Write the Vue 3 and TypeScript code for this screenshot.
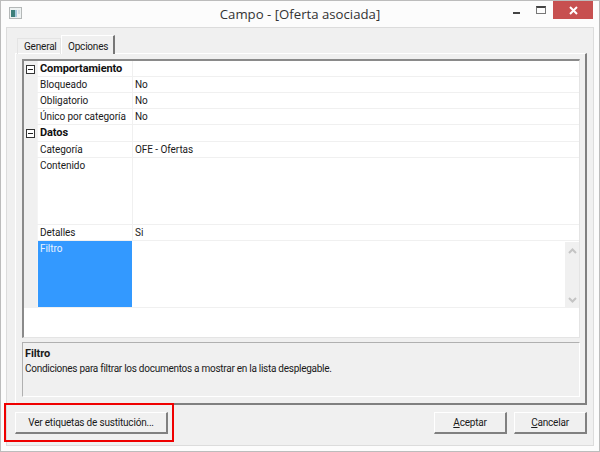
<script setup lang="ts">
interface Row { name: string; value?: string; size?: 'tall' | 'mid'; kind?: 'head' | 'sel' }
const rows: Row[] = [
  { name: 'Comportamiento', kind: 'head' },
  { name: 'Bloqueado', value: 'No' },
  { name: 'Obligatorio', value: 'No' },
  { name: 'Único por categoría', value: 'No' },
  { name: 'Datos', kind: 'head', size: 'mid' },
  { name: 'Categoría', value: 'OFE - Ofertas' },
  { name: 'Contenido', size: 'tall' },
  { name: 'Detalles', value: 'Si' },
  { name: 'Filtro', size: 'tall', kind: 'sel' },
]
</script>

<template>
  <div class="window">
    <header class="titlebar">
      <svg class="appicon" width="13" height="13" viewBox="0 0 13 13">
        <rect x="0.5" y="0.5" width="12" height="11" fill="#eef2f2" stroke="#b4b8b8" />
        <rect x="2" y="3" width="4" height="7" fill="#3c7f7a" />
        <rect x="6" y="3" width="2" height="7" fill="#a5c8dc" />
        <rect x="9" y="3" width="2" height="4" fill="#d5dfe5" />
      </svg>
      <div class="title">Campo - [Oferta asociada]</div>
      <div class="controls">
        <div class="ctl"><span class="min"></span></div>
        <div class="ctl"><span class="max"></span></div>
        <div class="close">
          <svg width="9" height="9" viewBox="0 0 9 9"><path d="M1 1l7 7M8 1L1 8" stroke="#fff" stroke-width="2" /></svg>
        </div>
      </div>
    </header>
    <main class="body">
      <nav class="tabs">
        <div class="tab">General</div>
        <div class="tab active">Opciones</div>
      </nav>
      <section class="panel">
        <div class="grid">
          <div v-for="r in rows" :key="r.name" class="row" :class="[r.size, { head: r.kind === 'head' }]">
            <div class="gutter"><span v-if="r.kind === 'head'" class="box"><i></i></span></div>
            <div class="name" :class="{ sel: r.kind === 'sel' }">{{ r.name }}</div>
            <div class="value">
              {{ r.value }}
              <div v-if="r.kind === 'sel'" class="scroll">
                <svg width="9" height="6" viewBox="0 0 9 6"><path d="M1 5l3.5-3.5L8 5" fill="none" stroke="#c4c4c4" stroke-width="2" /></svg>
                <svg width="9" height="6" viewBox="0 0 9 6"><path d="M1 1l3.5 3.5L8 1" fill="none" stroke="#c4c4c4" stroke-width="2" /></svg>
              </div>
            </div>
          </div>
        </div>
        <div class="desc">
          <div class="desc-title">Filtro</div>
          <div>Condiciones para filtrar los documentos a mostrar en la lista desplegable.</div>
        </div>
      </section>
      <footer class="actions">
        <button class="btn wide">Ver etiquetas de sustitución...</button>
        <div class="spacer"></div>
        <button class="btn"><u>A</u>ceptar</button>
        <button class="btn"><u>C</u>ancelar</button>
      </footer>
    </main>
    <div class="callout"></div>
  </div>
</template>

<style>
html, body { margin: 0; background: #fff; }
</style>

<style scoped>
.window {
  position: relative;
  width: 600px;
  height: 452px;
  box-sizing: border-box;
  border: 1px solid #bcbcbc;
  background: #fcfcfc;
  display: flex;
  flex-direction: column;
  font-family: Roboto, "Liberation Sans", sans-serif;
  font-size: 10px;
  letter-spacing: -0.2px;
  color: #1a1a1a;
  overflow: hidden;
}
.titlebar {
  height: 26px;
  flex: none;
  display: flex;
  align-items: flex-start;
  position: relative;
  padding-left: 8px;
  padding-right: 5px;
}
.appicon { margin-top: 6px; }
.title {
  position: absolute;
  left: 0;
  right: 0;
  top: 4px;
  text-align: center;
  font-family: "Open Sans", sans-serif;
  font-size: 13.2px;
  letter-spacing: 0;
  color: #333;
}
.controls {
  margin-left: auto;
  display: flex;
  position: relative;
}
.ctl {
  width: 27px;
  height: 18px;
  position: relative;
}
.min {
  position: absolute;
  left: 14px;
  top: 11px;
  width: 7px;
  height: 2px;
  background: #444;
}
.max {
  position: absolute;
  left: 10px;
  top: 5px;
  width: 8px;
  height: 5px;
  border: 1px solid #777;
  border-top: 2px solid #444;
}
.close {
  width: 40px;
  height: 18px;
  margin-right: 1px;
  background: #c75050;
  display: flex;
  align-items: center;
  justify-content: center;
}
.body {
  flex: 1;
  margin: 0 5px 5px;
  background: #f0f0f0;
  border: 1px solid #dcdcdc;
  padding: 7px 6px 0 8px;
  display: flex;
  flex-direction: column;
  min-height: 0;
}
.tabs {
  display: flex;
  height: 19px;
  flex: none;
  padding-left: 2px;
  align-items: flex-end;
  position: relative;
  z-index: 1;
  margin-bottom: -1px;
}
.tab {
  height: 16px;
  padding: 0 4px 0 6px;
  line-height: 16px;
  border: 1px solid #e4e4e4;
  border-bottom: 0;
  box-sizing: border-box;
  width: 44px;
}
.tab.active {
  height: 19px;
  width: 54px;
  line-height: 21px;
  padding: 0 0 0 6px;
  background: #f0f0f0;
  border-top-color: #fff;
  border-left-color: #fff;
  border-right: 2px solid #777;
}
.panel {
  height: 352px;
  flex: none;
  box-sizing: border-box;
  border: 1px solid #fff;
  border-right: 2px solid #808080;
  border-bottom: 2px solid #808080;
  padding: 5px 5px 6px 6px;
  display: flex;
  flex-direction: column;
  gap: 4px;
}
.grid {
  height: 279px;
  flex: none;
  box-sizing: border-box;
  border-top: 2px solid #8a8a8a;
  border-left: 2px solid #8a8a8a;
  border-right: 1px solid #e4e4e4;
  border-bottom: 1px solid #e4e4e4;
  background: #fff;
  letter-spacing: -0.06px;
}
.row {
  display: flex;
  height: 16px;
  line-height: 15px;
  border-bottom: 1px solid #f0f0f0;
  box-sizing: border-box;
}
.row.mid { height: 17px; line-height: 16px; }
.row.tall { height: 67px; }
.gutter {
  width: 14px;
  flex: none;
  box-sizing: border-box;
  background: #f0f0f0;
  position: relative;
  border-right: 1px solid #f4f4f4;
}
.box {
  position: absolute;
  left: 2px;
  top: 4px;
  width: 7px;
  height: 7px;
  border: 1px solid #333;
  background: #fff;
}
.box i {
  position: absolute;
  left: 1px;
  right: 1px;
  top: 3px;
  height: 1px;
  background: #222;
}
.name {
  width: 95px;
  flex: none;
  padding-left: 2px;
  box-sizing: border-box;
  border-right: 1px solid #f0f0f0;
  white-space: nowrap;
}
.name.sel {
  background: #3399ff;
  color: #e8f3ff;
  border-right-color: #fff;
}
.head .name {
  font-size: 11px;
  font-weight: bold;
  letter-spacing: -0.1px;
  color: #111;
}
.value {
  flex: 1;
  padding-left: 2px;
  position: relative;
}
.scroll {
  position: absolute;
  right: 0;
  top: 1px;
  bottom: 0;
  width: 14px;
  background: #f0f0f0;
  display: flex;
  flex-direction: column;
  align-items: center;
  justify-content: space-between;
  padding: 6px 0 4px;
  box-sizing: border-box;
}
.desc {
  flex: 1;
  border: 1px solid #b0b0b0;
  border-right-color: #fff;
  border-bottom-color: #fff;
  padding: 3px 2px;
  line-height: 15px;
  letter-spacing: -0.27px;
}
.desc-title {
  font-size: 11px;
  font-weight: bold;
  letter-spacing: -0.1px;
}
.actions {
  display: flex;
  gap: 7px;
  margin-top: 7px;
}
.spacer { flex: 1; }
.btn {
  width: 73px;
  height: 22px;
  padding: 0;
  box-sizing: border-box;
  background: #f0f0f0;
  border: 1px solid #fff;
  border-right: 2px solid #808080;
  border-bottom: 2px solid #808080;
  font: inherit;
  letter-spacing: inherit;
  color: #1a1a1a;
}
.btn.wide { width: 153px; }
.callout {
  position: absolute;
  left: 3px;
  top: 402px;
  width: 166px;
  height: 35px;
  border: 2px solid #ef0000;
  pointer-events: none;
}
</style>
